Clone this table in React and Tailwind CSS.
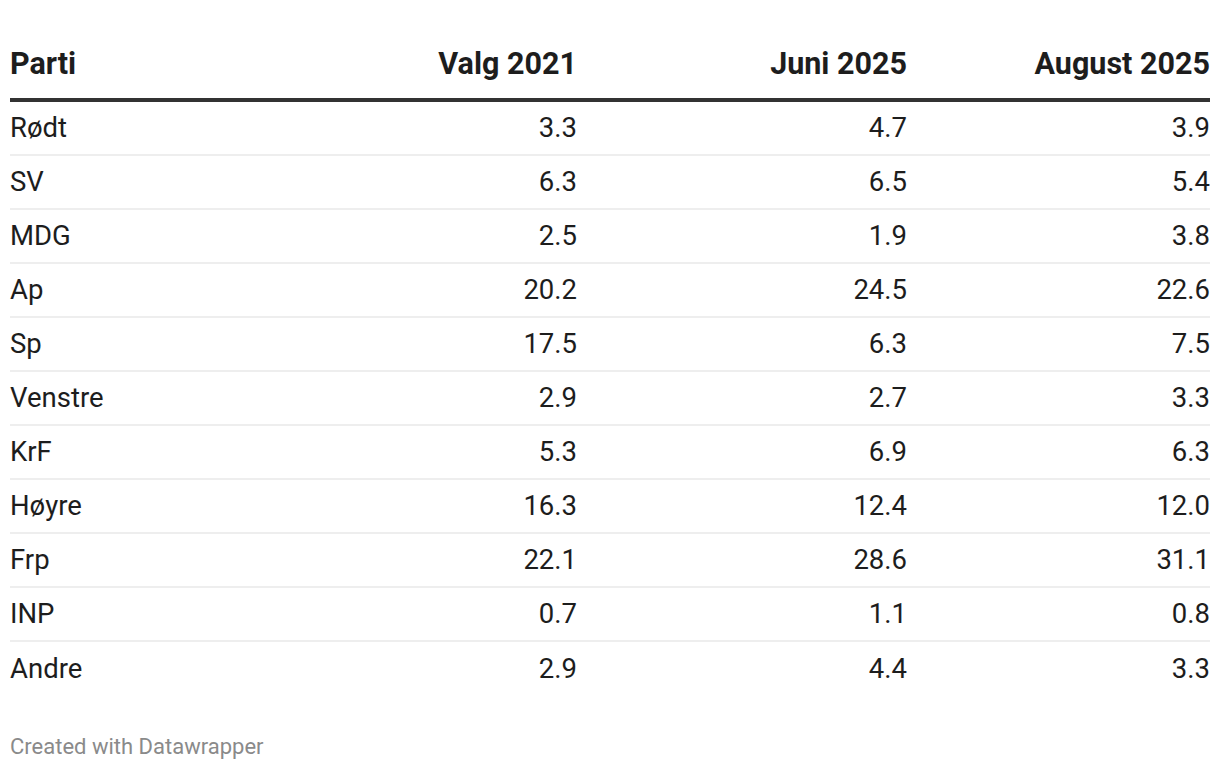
import React from "react";

const rows = [
  ["Rødt", "3.3", "4.7", "3.9"],
  ["SV", "6.3", "6.5", "5.4"],
  ["MDG", "2.5", "1.9", "3.8"],
  ["Ap", "20.2", "24.5", "22.6"],
  ["Sp", "17.5", "6.3", "7.5"],
  ["Venstre", "2.9", "2.7", "3.3"],
  ["KrF", "5.3", "6.9", "6.3"],
  ["Høyre", "16.3", "12.4", "12.0"],
  ["Frp", "22.1", "28.6", "31.1"],
  ["INP", "0.7", "1.1", "0.8"],
  ["Andre", "2.9", "4.4", "3.3"],
];

const cols = "grid grid-cols-[280px_287px_330px_303px]";

export default function App() {
  return (
    <div className="w-[1220px] h-[770px] bg-white px-[10px] pt-[41px] text-[#1d1d1d]" style={{ fontFamily: "Roboto, 'Liberation Sans', sans-serif" }}>
      <div className={`${cols} h-[61px] items-start border-b-4 border-[#333333] text-[30.5px] leading-normal font-bold text-[#1d1d1d]`}>
        <div>Parti</div>
        <div className="text-right">Valg 2021</div>
        <div className="text-right">Juni 2025</div>
        <div className="text-right">August 2025</div>
      </div>
      {rows.map((r, i) => (
        <div
          key={r[0]}
          className={`${cols} h-[54px] items-center text-[27.5px] ${i < rows.length - 1 ? "border-b-2 border-[#eeeeee]" : ""}`}
        >
          <div>{r[0]}</div>
          <div className="text-right">{r[1]}</div>
          <div className="text-right">{r[2]}</div>
          <div className="text-right">{r[3]}</div>
        </div>
      ))}
      <div className="mt-[34px] text-[22px] text-[#8a8a8a]">Created with Datawrapper</div>
    </div>
  );
}
